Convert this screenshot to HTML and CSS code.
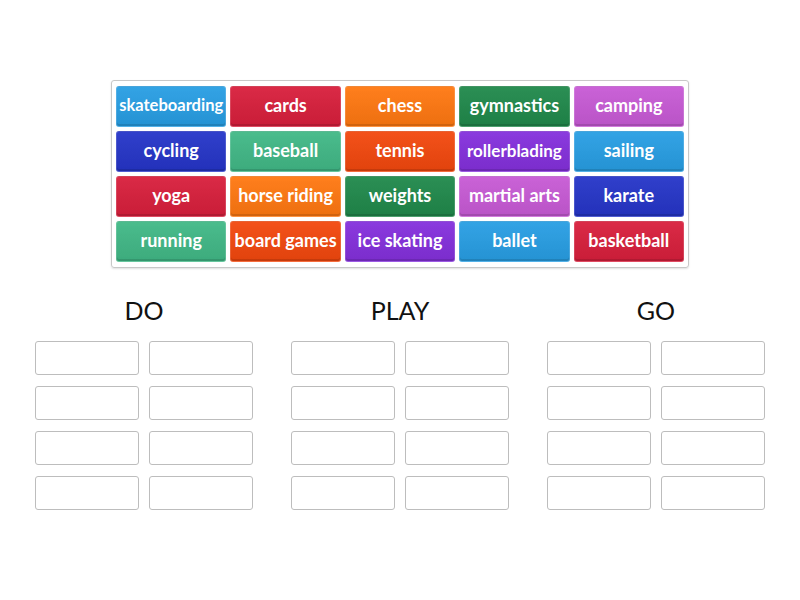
FILE: index.html
```html
<!DOCTYPE html>
<html lang="en">
<head>
  <meta charset="UTF-8">
  <meta name="viewport" content="width=device-width, initial-scale=1.0">
  <title>Group sort</title>
  <link rel="stylesheet" href="styles.css">
</head>
<body>
  <div class="bank">
    <div class="tile sky small">skateboarding</div>
    <div class="tile red">cards</div>
    <div class="tile orange">chess</div>
    <div class="tile green">gymnastics</div>
    <div class="tile pink">camping</div>

    <div class="tile navy">cycling</div>
    <div class="tile teal">baseball</div>
    <div class="tile flame">tennis</div>
    <div class="tile violet snug">rollerblading</div>
    <div class="tile sky">sailing</div>

    <div class="tile red">yoga</div>
    <div class="tile orange">horse riding</div>
    <div class="tile green">weights</div>
    <div class="tile pink">martial arts</div>
    <div class="tile navy">karate</div>

    <div class="tile teal">running</div>
    <div class="tile flame">board games</div>
    <div class="tile violet">ice skating</div>
    <div class="tile sky">ballet</div>
    <div class="tile red">basketball</div>
  </div>

  <div class="groups">
    <div class="group">
      <div class="group-title">DO</div>
      <div class="slots">
        <div class="slot"></div><div class="slot"></div>
        <div class="slot"></div><div class="slot"></div>
        <div class="slot"></div><div class="slot"></div>
        <div class="slot"></div><div class="slot"></div>
      </div>
    </div>
    <div class="group">
      <div class="group-title">PLAY</div>
      <div class="slots">
        <div class="slot"></div><div class="slot"></div>
        <div class="slot"></div><div class="slot"></div>
        <div class="slot"></div><div class="slot"></div>
        <div class="slot"></div><div class="slot"></div>
      </div>
    </div>
    <div class="group">
      <div class="group-title">GO</div>
      <div class="slots">
        <div class="slot"></div><div class="slot"></div>
        <div class="slot"></div><div class="slot"></div>
        <div class="slot"></div><div class="slot"></div>
        <div class="slot"></div><div class="slot"></div>
      </div>
    </div>
  </div>
</body>
</html>
```

FILE: styles.css
```css
body {
  margin: 0;
  background: #fff;
  font-family: Lato, "Open Sans", sans-serif;
  color: #222;
}

/* word bank */
.bank {
  width: 578px;
  box-sizing: border-box;
  margin: 80px 0 0 111px;
  padding: 5px 4px 5px 4px;
  border: 1px solid #c8c8c8;
  border-radius: 3px;
  box-shadow: 0 1px 2px rgba(0, 0, 0, 0.12);
  display: grid;
  grid-template-columns: repeat(5, 1fr);
  grid-auto-rows: 41px;
  gap: 4px;
}
.tile {
  display: flex;
  align-items: center;
  justify-content: center;
  padding-bottom: 3px;
  box-sizing: border-box;
  border-radius: 3px;
  border: 1px solid rgba(255, 255, 255, 0.16);
  background-image: linear-gradient(rgba(255, 255, 255, 0.05), rgba(0, 0, 0, 0.07));
  box-shadow: inset 0 -2px 0 rgba(0, 0, 0, 0.12);
  color: #fff;
  font-size: 18px;
  font-weight: 700;
  white-space: nowrap;
}
.tile.small {
  font-size: 16.5px;
}
.tile.snug {
  font-size: 17px;
}
.sky { background-color: #289ee3; }
.red { background-color: #d81f3c; }
.orange { background-color: #ff7811; }
.green { background-color: #20894b; }
.pink { background-color: #c75ad5; }
.navy { background-color: #2535c8; }
.teal { background-color: #41b886; }
.flame { background-color: #f2480e; }
.violet { background-color: #8430dc; }

/* drop groups */
.groups {
  display: flex;
  justify-content: center;
  gap: 38px;
  margin-top: 27px;
}
.group {
  width: 218px;
}
.group-title {
  text-align: center;
  font-size: 25px;
  line-height: 30px;
  font-weight: 400;
  color: #111;
  margin-bottom: 16px;
}
.slots {
  display: grid;
  grid-template-columns: 104px 104px;
  grid-auto-rows: 34px;
  column-gap: 10px;
  row-gap: 11px;
}
.slot {
  border: 1px solid #bdbdbd;
  border-radius: 3px;
  background: #fff;
}
```
